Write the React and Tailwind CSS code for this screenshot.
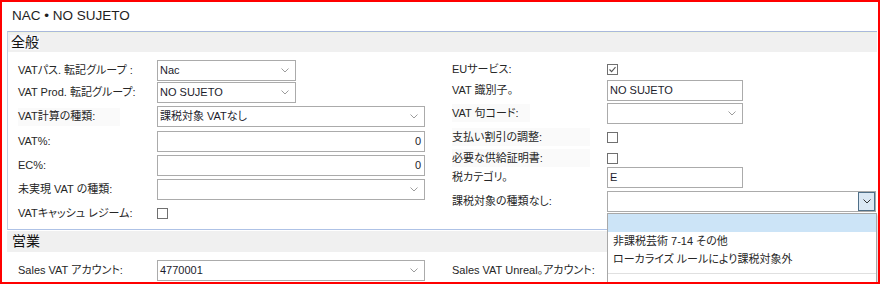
import React from 'react';

const Chevron = ({ className = 'text-[#9c9c9c]' }) => (
  <svg width="8" height="5" viewBox="0 0 8 5" className={className}>
    <path d="M0.5 0.5 L4 4 L7.5 0.5" fill="none" stroke="currentColor" strokeWidth="1" />
  </svg>
);

const Select = ({ width, value }) => (
  <div className={`${width} h-[21px] border border-[#ababab] bg-white flex items-center justify-between pl-[2px] pr-[6px]`}>
    <span className="text-[#1c1c2c]">{value}</span>
    <Chevron />
  </div>
);

const Input = ({ width, value, right }) => (
  <div
    className={`${width} h-[21px] border border-[#ababab] bg-white flex items-center px-[2px] ${
      right ? 'justify-end pr-[3px]' : ''
    }`}
  >
    <span className="text-[#1c1c2c]">{value}</span>
  </div>
);

const Checkbox = ({ checked }) => (
  <div className="w-[11px] h-[11px] border border-[#707070] bg-white flex items-center justify-center">
    {checked && (
      <svg width="9" height="9" viewBox="0 0 9 9">
        <path d="M1.5 4.5 L3.6 6.6 L7.5 2.2" fill="none" stroke="#555" strokeWidth="1.1" />
      </svg>
    )}
  </div>
);

const Row = ({ h, label, labelWidth, shade, children }) => (
  <div className={`${h} flex items-center`}>
    <div className={`${labelWidth} shrink-0 h-full flex items-center`}>
      <span className={shade ? `${shade} bg-[#fafafa] h-[18px] flex items-center` : ''}>{label}</span>
    </div>
    {children}
  </div>
);

const App = () => {
  return (
    <div className="w-[880px] h-[284px] border-2 border-[#ff0000] bg-white overflow-hidden relative font-['Liberation_Sans','Noto_Sans_CJK_JP',sans-serif] [font-feature-settings:'palt'] text-[11px] text-[#262626]">
      {/* Title */}
      <div className="h-[29px] pl-[10px] pt-[6px] text-[13.5px] leading-[16px] text-[#1e1e1e]">NAC • NO SUJETO</div>

      {/* 全般 */}
      <div className="ml-[5px] mr-[1px] border-t border-l border-b border-t-[#a9b8dc] border-l-[#c3cde2] border-b-[#aec2e6]">
        <div className="h-[20px] bg-[#f0f0f0] border-t border-[#eef2e0] flex items-center">
          <span className="ml-[2px] px-[1px] bg-[#f7f7fb] text-[14px] leading-[15px] text-[#111]">全般</span>
        </div>
        <div className="flex pt-[7px] pb-[4px] pl-[10px]">
          {/* left column */}
          <div className="w-[407px] flex flex-col">
            <Row h="h-[22px]" labelWidth="w-[139px]" label="VATパス. 転記グループ :">
              <Select width="w-[139px]" value="Nac" />
            </Row>
            <Row h="h-[23px]" labelWidth="w-[139px]" label="VAT Prod. 転記グループ:">
              <Select width="w-[139px]" value="NO SUJETO" />
            </Row>
            <Row h="h-[25px]" labelWidth="w-[139px]" label="VAT計算の種類:" shade="w-[102px]">
              <Select width="w-[268px]" value="課税対象 VATなし" />
            </Row>
            <Row h="h-[24px]" labelWidth="w-[139px]" label="VAT%:">
              <Input width="w-[268px]" value="0" right />
            </Row>
            <Row h="h-[24px]" labelWidth="w-[139px]" label="EC%:">
              <Input width="w-[268px]" value="0" right />
            </Row>
            <Row h="h-[24px]" labelWidth="w-[139px]" label="未実現 VAT の種類:">
              <Select width="w-[268px]" value="" />
            </Row>
            <Row h="h-[24px]" labelWidth="w-[139px]" label="VATキャッシュ レジーム:">
              <Checkbox />
            </Row>
          </div>

          {/* right column */}
          <div className="ml-[27px] flex flex-col">
            <Row h="h-[20px]" labelWidth="w-[155px]" label="EUサービス:">
              <Checkbox checked />
            </Row>
            <Row h="h-[23px]" labelWidth="w-[155px]" label="VAT 識別子。">
              <Input width="w-[136px]" value="NO SUJETO" />
            </Row>
            <Row h="h-[22px]" labelWidth="w-[155px]" label="VAT 句コード:" shade="w-[78px]">
              <Select width="w-[136px]" value="" />
            </Row>
            <Row h="h-[26px]" labelWidth="w-[155px]" label="支払い割引の調整:" shade="w-[138px]">
              <Checkbox />
            </Row>
            <Row h="h-[16px]" labelWidth="w-[155px]" label="必要な供給証明書:" shade="w-[138px]">
              <Checkbox />
            </Row>
            <Row h="h-[23px]" labelWidth="w-[155px]" label="税カテゴリ。">
              <Input width="w-[136px]" value="E" />
            </Row>
            <Row h="h-[25px]" labelWidth="w-[155px]" label="課税対象の種類なし:">
              <div className="w-[269px] h-[21px] border border-[#ababab] bg-white flex items-stretch justify-end">
                <div className="w-[17px] border border-[#4f6f88] bg-[#dbe8f4] flex items-center justify-center">
                  <Chevron className="text-[#333]" />
                </div>
              </div>
            </Row>
          </div>
        </div>
      </div>

      {/* 営業 */}
      <div className="ml-[5px] mr-[1px] mt-[1px] h-[21px] bg-[#f0f0f0] flex items-center pl-[5px]">
        <span className="text-[14px] leading-[15px] text-[#111]">営業</span>
      </div>
      <div className="flex pt-[7px] pl-[16px]">
        <div className="w-[407px] flex items-center h-[22px]">
          <div className="w-[139px] shrink-0">Sales VAT アカウント:</div>
          <Select width="w-[268px]" value="4770001" />
        </div>
        <div className="ml-[27px] flex items-center h-[22px]">
          <div className="w-[155px]">Sales VAT Unreal。アカウント:</div>
        </div>
      </div>

      {/* open dropdown list */}
      <div className="absolute left-[605px] top-[211px] w-[270px] h-[80px] bg-white border border-[#a8a8a8] shadow-[2px_2px_2px_rgba(0,0,0,0.12)]">
        <div className="h-[18px] bg-[#cce4f7]"></div>
        <div className="h-[18px] pl-[5px] flex items-center">非課税芸術 7-14 その他</div>
        <div className="h-[18px] pl-[5px] flex items-center">ローカライズ ルールにより課税対象外</div>
        <div className="mt-[5px] border-t border-[#e0e0e0]"></div>
      </div>
    </div>
  );
};

export default App;
